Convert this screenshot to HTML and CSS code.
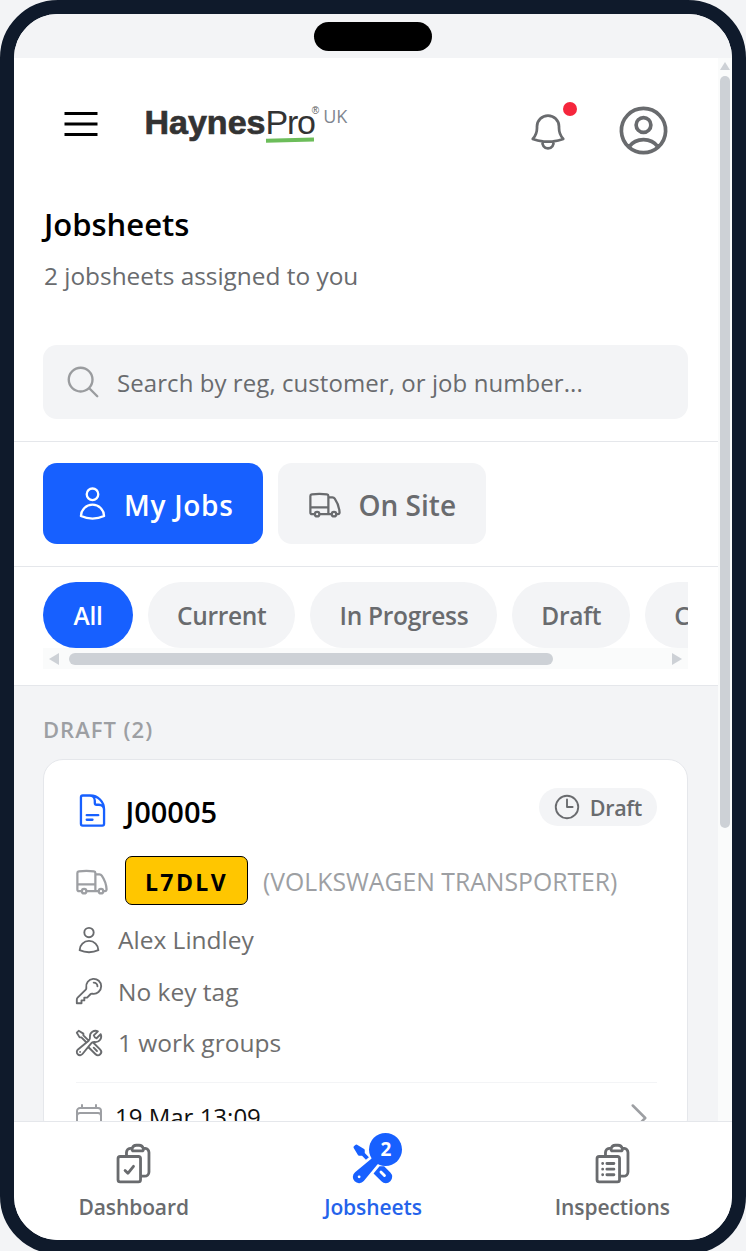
FILE: index.html
```html
<!DOCTYPE html>
<html lang="en">
<head>
  <meta charset="UTF-8" />
  <meta name="viewport" content="width=device-width, initial-scale=1.0"/>
  <title>Jobsheets</title>
  <link rel="stylesheet" href="styles.css">
</head>
<body>
  <svg class="sprite" width="0" height="0" aria-hidden="true">
    <symbol id="i-user" viewBox="0 0 24 24"><path d="M15.75 6a3.75 3.75 0 1 1-7.5 0 3.75 3.75 0 0 1 7.5 0ZM4.501 20.118a7.5 7.5 0 0 1 14.998 0A17.933 17.933 0 0 1 12 21.75c-2.676 0-5.216-.584-7.499-1.632Z"/></symbol>
    <symbol id="i-truck" viewBox="0 0 24 24"><path d="M8.25 18.75a1.5 1.5 0 0 1-3 0m3 0a1.5 1.5 0 0 0-3 0m3 0h6m-9 0H3.375a1.125 1.125 0 0 1-1.125-1.125V14.25m17.25 4.5a1.5 1.5 0 0 1-3 0m3 0a1.5 1.5 0 0 0-3 0m3 0h1.125c.621 0 1.129-.504 1.09-1.124a17.902 17.902 0 0 0-3.213-9.193 2.056 2.056 0 0 0-1.58-.86H14.25M16.5 18.75h-2.25m0-11.177v-.958c0-.568-.422-1.048-.987-1.106a48.554 48.554 0 0 0-10.026 0 1.106 1.106 0 0 0-.987 1.106v7.635m12-6.677v6.677m0 4.5v-4.5m0 0h-12"/></symbol>
  </svg>

  <div class="phone">
    <div class="status"><div class="notch"></div></div>

    <div class="screen">
      <main class="content">
        <section class="top">
          <header class="header">
            <div class="header-left">
              <svg class="icon menu-icon" viewBox="0 0 24 24"><path d="M3.75 6.75h16.5M3.75 12h16.5m-16.5 5.25h16.5"/></svg>
              <div class="logo">
                <span class="logo-name"><b>Haynes</b><span class="logo-pro">Pro</span></span>
                <span class="logo-reg">®</span>
                <span class="logo-region">UK</span>
              </div>
            </div>
            <div class="header-right">
              <div class="bell">
                <svg class="icon bell-icon" viewBox="0 0 24 24"><path d="M14.857 17.082a23.848 23.848 0 0 0 5.454-1.31A8.967 8.967 0 0 1 18 9.75V9A6 6 0 0 0 6 9v.75a8.967 8.967 0 0 1-2.312 6.022c1.733.64 3.56 1.085 5.455 1.31m5.714 0a24.255 24.255 0 0 1-5.714 0m5.714 0a3 3 0 1 1-5.714 0"/></svg>
                <span class="bell-dot"></span>
              </div>
              <svg class="icon profile-icon" viewBox="0 0 24 24"><path d="M17.982 18.725A7.488 7.488 0 0 0 12 15.75a7.488 7.488 0 0 0-5.982 2.975m11.963 0a9 9 0 1 0-11.963 0m11.963 0A8.966 8.966 0 0 1 12 21a8.966 8.966 0 0 1-5.982-2.275M15 9.75a3 3 0 1 1-6 0 3 3 0 0 1 6 0Z"/></svg>
            </div>
          </header>

          <h1>Jobsheets</h1>
          <p class="subtitle">2 jobsheets assigned to you</p>

          <div class="search">
            <svg class="icon search-icon" viewBox="0 0 24 24"><path d="m21 21-5.197-5.197m0 0A7.5 7.5 0 1 0 5.196 5.196a7.5 7.5 0 0 0 10.607 10.607Z"/></svg>
            <span>Search by reg, customer, or job number...</span>
          </div>
        </section>

        <section class="tabs">
          <div class="tab active">
            <svg class="icon tab-user"><use href="#i-user"/></svg>
            <span>My Jobs</span>
          </div>
          <div class="tab">
            <svg class="icon tab-truck"><use href="#i-truck"/></svg>
            <span>On Site</span>
          </div>
        </section>

        <section class="filters">
          <div class="chips">
            <div class="chip active">All</div>
            <div class="chip">Current</div>
            <div class="chip">In Progress</div>
            <div class="chip">Draft</div>
            <div class="chip">Completed</div>
          </div>
          <div class="hscroll">
            <span class="arrow-left"></span>
            <span class="hscroll-thumb"></span>
            <span class="arrow-right"></span>
          </div>
        </section>

        <section class="list">
          <div class="group-label">DRAFT (2)</div>
          <article class="card">
            <div class="card-head">
              <div class="job-no">
                <svg class="icon doc-icon" viewBox="0 0 24 24"><path d="M19.5 14.25v-2.625a3.375 3.375 0 0 0-3.375-3.375h-1.5A1.125 1.125 0 0 1 13.5 7.125v-1.5a3.375 3.375 0 0 0-3.375-3.375H8.25m0 12.75h7.5m-7.5 3H12M10.5 2.25H5.625c-.621 0-1.125.504-1.125 1.125v17.25c0 .621.504 1.125 1.125 1.125h12.75c.621 0 1.125-.504 1.125-1.125V11.25a9 9 0 0 0-9-9Z"/></svg>
                <span>J00005</span>
              </div>
              <div class="status-pill">
                <svg class="icon clock-icon" viewBox="0 0 24 24"><path d="M12 6v6h4.5m4.5 0a9 9 0 1 1-18 0 9 9 0 0 1 18 0Z"/></svg>
                <span>Draft</span>
              </div>
            </div>

            <div class="vehicle">
              <svg class="icon vehicle-icon"><use href="#i-truck"/></svg>
              <span class="plate">L7DLV</span>
              <span class="model">(VOLKSWAGEN TRANSPORTER)</span>
            </div>

            <div class="meta">
              <svg class="icon meta-icon"><use href="#i-user"/></svg>
              <span>Alex Lindley</span>
            </div>
            <div class="meta">
              <svg class="icon meta-icon" viewBox="0 0 24 24"><path d="M15.75 5.25a3 3 0 0 1 3 3m3 0a6 6 0 0 1-7.029 5.912c-.563-.097-1.159.026-1.563.43L10.5 17.25H8.25v2.25H6v2.25H2.25v-2.818c0-.597.237-1.17.659-1.591l6.499-6.499c.404-.404.527-1 .43-1.563A6 6 0 1 1 21.75 8.25Z"/></svg>
              <span>No key tag</span>
            </div>
            <div class="meta">
              <svg class="icon meta-icon" viewBox="0 0 24 24"><path d="M11.42 15.17 17.25 21A2.652 2.652 0 0 0 21 17.25l-5.877-5.877M11.42 15.17l2.496-3.03c.317-.384.74-.626 1.208-.766M11.42 15.17l-4.655 5.653a2.548 2.548 0 1 1-3.586-3.586l6.837-5.63m5.108-.233c.55-.164 1.163-.188 1.743-.14a4.5 4.5 0 0 0 4.486-6.336l-3.276 3.277a3.004 3.004 0 0 1-2.25-2.25l3.276-3.276a4.5 4.5 0 0 0-6.336 4.486c.091 1.076-.071 2.264-.904 2.95l-.102.085m-1.745 1.437L5.909 7.5H4.5L2.25 3.75l1.5-1.5L7.5 4.5v1.409l4.26 4.26m-1.745 1.437 1.745-1.437m6.615 8.206L15.75 15.75M4.867 19.125h.008v.008h-.008v-.008Z"/></svg>
              <span>1 work groups</span>
            </div>

            <div class="card-foot">
              <div class="date">
                <svg class="icon date-icon" viewBox="0 0 24 24"><path d="M6.75 3v2.25M17.25 3v2.25M3 18.75V7.5a2.25 2.25 0 0 1 2.25-2.25h13.5A2.25 2.25 0 0 1 21 7.5v11.25m-18 0A2.25 2.25 0 0 0 5.25 21h13.5A2.25 2.25 0 0 0 21 18.75m-18 0v-7.5A2.25 2.25 0 0 1 5.25 9h13.5A2.25 2.25 0 0 1 21 11.25v7.5"/></svg>
                <span>19 Mar 13:09</span>
              </div>
              <svg class="icon chevron-icon" viewBox="0 0 24 24"><path d="m8.25 4.5 7.5 7.5-7.5 7.5"/></svg>
            </div>
          </article>
        </section>
      </main>

      <div class="vscroll">
        <span class="arrow-up"></span>
        <span class="vscroll-thumb"></span>
      </div>
    </div>

    <nav class="bottom-nav">
      <div class="nav-item">
        <svg class="icon nav-icon" viewBox="0 0 24 24"><path d="M11.35 3.836c-.065.21-.1.433-.1.664 0 .414.336.75.75.75h4.5a.75.75 0 0 0 .75-.75 2.25 2.25 0 0 0-.1-.664m-5.8 0A2.251 2.251 0 0 1 13.5 2.25H15c1.012 0 1.867.668 2.15 1.586m-5.8 0c-.376.023-.75.05-1.124.08C9.095 4.01 8.25 4.973 8.25 6.108V8.25m8.9-4.414c.376.023.75.05 1.124.08 1.131.094 1.976 1.057 1.976 2.192V16.5A2.25 2.25 0 0 1 18 18.75h-2.25m-7.5-10.5H4.875c-.621 0-1.125.504-1.125 1.125v11.25c0 .621.504 1.125 1.125 1.125h9.75c.621 0 1.125-.504 1.125-1.125V18.75m-7.5-10.5h6.375c.621 0 1.125.504 1.125 1.125v9.375m-8.25-3 1.5 1.5 3-3.75"/></svg>
        <span>Dashboard</span>
      </div>
      <div class="nav-item active">
        <div class="nav-icon-wrap">
          <svg class="nav-icon solid" viewBox="0 0 24 24"><path fill-rule="evenodd" d="M12 6.75a5.25 5.25 0 0 1 6.775-5.025.75.75 0 0 1 .313 1.248l-3.32 3.319c.063.475.276.934.641 1.299.365.365.824.578 1.3.64l3.318-3.319a.75.75 0 0 1 1.248.313 5.25 5.25 0 0 1-5.472 6.756c-1.018-.086-1.87.1-2.309.634L7.344 21.3A3.298 3.298 0 1 1 2.7 16.657l8.684-7.151c.533-.44.72-1.291.634-2.309A5.342 5.342 0 0 1 12 6.75ZM4.117 19.125a.75.75 0 0 1 .75-.75h.008a.75.75 0 0 1 .75.75v.008a.75.75 0 0 1-.75.75h-.008a.75.75 0 0 1-.75-.75v-.008Z" clip-rule="evenodd"/><path d="m10.076 8.64-2.201-2.2V4.874a.75.75 0 0 0-.364-.643l-3.75-2.25a.75.75 0 0 0-.916.113l-.75.75a.75.75 0 0 0-.113.916l2.25 3.75a.75.75 0 0 0 .643.364h1.564l2.062 2.062 1.575-1.297Z"/><path fill-rule="evenodd" d="m12.556 17.329 4.183 4.182a3.375 3.375 0 0 0 4.773-4.773l-3.306-3.305a6.803 6.803 0 0 1-1.53.043c-.394-.034-.682-.006-.867.042a.589.589 0 0 0-.167.063l-3.086 3.748Zm3.414-1.36a.75.75 0 0 1 1.06 0l1.875 1.876a.75.75 0 1 1-1.06 1.06L15.97 17.03a.75.75 0 0 1 0-1.06Z" clip-rule="evenodd"/></svg>
          <span class="nav-badge">2</span>
        </div>
        <span>Jobsheets</span>
      </div>
      <div class="nav-item">
        <svg class="icon nav-icon" viewBox="0 0 24 24"><path d="M9 12h3.75M9 15h3.75M9 18h3.75m3 .75H18a2.25 2.25 0 0 0 2.25-2.25V6.108c0-1.135-.845-2.098-1.976-2.192a48.424 48.424 0 0 0-1.123-.08m-5.801 0c-.065.21-.1.433-.1.664 0 .414.336.75.75.75h4.5a.75.75 0 0 0 .75-.75 2.25 2.25 0 0 0-.1-.664m-5.8 0A2.251 2.251 0 0 1 13.5 2.25H15c1.012 0 1.867.668 2.15 1.586m-5.8 0c-.376.023-.75.05-1.124.08C9.095 4.01 8.25 4.973 8.25 6.108V8.25m0 0H4.875c-.621 0-1.125.504-1.125 1.125v11.25c0 .621.504 1.125 1.125 1.125h9.75c.621 0 1.125-.504 1.125-1.125V9.375c0-.621-.504-1.125-1.125-1.125H8.25ZM6.75 12h.008v.008H6.75V12Zm0 3h.008v.008H6.75V15Zm0 3h.008v.008H6.75V18Z"/></svg>
        <span>Inspections</span>
      </div>
    </nav>
  </div>
</body>
</html>
```

FILE: styles.css
```css
:root {
  --blue: #1760ff;
  --frame: #0f1a2b;
  --soft: #f3f4f6;
  --line: #e5e7eb;
  --grey: #696b6e;
  --muted: #9d9fa3;
  --bar: #cdd1d6;
}

html, body {
  margin: 0;
  height: 100%;
  overflow: hidden;
}

body {
  background: var(--soft);
  font-family: "Open Sans", "Noto Sans", sans-serif;
  color: #000;
}

.sprite {
  display: block;
  height: 0;
}

.icon {
  display: block;
  flex: none;
  fill: none;
  stroke: currentColor;
  stroke-width: 1.5;
  stroke-linecap: round;
  stroke-linejoin: round;
}

.phone {
  box-sizing: border-box;
  width: 746px;
  height: 1254px;
  border: 14px solid var(--frame);
  border-radius: 58px;
  background: #fff;
  overflow: hidden;
  display: flex;
  flex-direction: column;
  position: relative;
}

.status {
  flex: none;
  height: 44px;
  background: var(--soft);
}

.notch {
  position: absolute;
  top: 8px;
  left: 300px;
  width: 118px;
  height: 29px;
  border-radius: 15px;
  background: #000;
}

.screen {
  flex: 1;
  min-height: 0;
  display: flex;
}

.content {
  flex: 1;
  min-width: 0;
  overflow: hidden;
}

.vscroll {
  flex: none;
  box-sizing: border-box;
  width: 14px;
  padding: 4px 2px 0;
  background: #fafbfb;
  display: flex;
  flex-direction: column;
  align-items: center;
}

.arrow-up {
  width: 0;
  height: 0;
  border-left: 5px solid transparent;
  border-right: 5px solid transparent;
  border-bottom: 8px solid var(--bar);
}

.vscroll-thumb {
  width: 10px;
  height: 752px;
  margin-top: 6px;
  border-radius: 5px;
  background: var(--bar);
}

/* top block */
.top {
  padding: 41px 30px 22px 29px;
  border-bottom: 1px solid var(--line);
}

.header {
  display: flex;
  justify-content: space-between;
  align-items: flex-start;
  margin: 0 15.5px 0 13.5px;
}

.header-left {
  display: flex;
  align-items: flex-start;
  gap: 40px;
  margin-top: 1px;
}

.menu-icon {
  width: 48px;
  height: 48px;
  color: #000;
  stroke-linecap: butt;
}

.logo {
  display: flex;
  align-items: flex-start;
  color: #333;
}

.logo-name {
  font-family: "Liberation Sans", Arial, sans-serif;
  font-size: 34px;
  line-height: 44px;
}

.logo-name b {
  -webkit-text-stroke: 0.7px #333;
}

.logo-pro {
  position: relative;
  letter-spacing: -1.2px;
}

.logo-pro::after {
  content: "";
  position: absolute;
  left: 1px;
  right: 0;
  bottom: -1px;
  height: 4px;
  background: #6cbd5a;
  transform: rotate(-1.5deg);
}

.logo-reg {
  font-family: "Liberation Sans", Arial, sans-serif;
  font-size: 10px;
  line-height: 12px;
  margin: 5px 0 0 -3px;
  color: #555;
}

.logo-region {
  font-size: 18px;
  line-height: 24px;
  margin: 4px 0 0 4px;
  color: #808690;
}

.header-right {
  display: flex;
  align-items: center;
  gap: 43.5px;
  margin-top: 2px;
  color: var(--grey);
}

.bell {
  position: relative;
  margin-top: 2px;
}

.bell-icon {
  width: 44px;
  height: 44px;
}

.bell-dot {
  position: absolute;
  top: -8px;
  right: -7px;
  width: 14px;
  height: 14px;
  border-radius: 50%;
  background: #f5263c;
}

.profile-icon {
  width: 59px;
  height: 59px;
}

h1 {
  margin: 44px 0 0 1px;
  font-size: 31px;
  line-height: 40px;
  font-weight: 600;
}

.subtitle {
  margin: 15px 0 0 1px;
  font-size: 24.4px;
  line-height: 34px;
  color: var(--grey);
}

.search {
  margin-top: 52px;
  height: 74px;
  padding-left: 21px;
  border-radius: 14px;
  background: var(--soft);
  display: flex;
  align-items: center;
  gap: 15px;
  font-size: 24px;
  letter-spacing: 0.07px;
  color: var(--grey);
}

.search-icon {
  width: 38px;
  height: 38px;
  color: #9a9c9f;
}

/* job scope tabs */
.tabs {
  display: flex;
  gap: 15px;
  padding: 21px 29px 22px;
  border-bottom: 1px solid var(--line);
}

.tab {
  height: 81px;
  padding: 0 30px 0 29px;
  border-radius: 14px;
  background: var(--soft);
  color: var(--grey);
  display: flex;
  align-items: center;
  gap: 16px;
  font-size: 28px;
  font-weight: 600;
}

.tab span {
  padding-top: 2px;
}

.tab.active {
  padding-right: 29px;
  gap: 13px;
  background: var(--blue);
  color: #fff;
  letter-spacing: 0.7px;
}

.tab-user {
  width: 37px;
  height: 37px;
  margin-left: 2px;
}

.tab-truck {
  width: 36px;
  height: 36px;
}

/* status filter */
.filters {
  padding: 15px 30px 16px 29px;
  border-bottom: 1px solid var(--line);
}

.chips {
  display: flex;
  gap: 15px;
  overflow: hidden;
}

.chip {
  flex: none;
  height: 66px;
  padding: 0 29px;
  border-radius: 33px;
  background: var(--soft);
  color: var(--grey);
  display: flex;
  align-items: center;
  font-size: 24.5px;
  letter-spacing: -0.3px;
  font-weight: 600;
}

.chip.active {
  padding: 0 30.5px;
  background: var(--blue);
  color: #fff;
}

.hscroll {
  box-sizing: border-box;
  height: 21px;
  padding: 0 6px;
  background: #fafbfb;
  display: flex;
  align-items: center;
  gap: 10px;
}

.arrow-left {
  width: 0;
  height: 0;
  border-top: 6px solid transparent;
  border-bottom: 6px solid transparent;
  border-right: 10px solid var(--bar);
}

.arrow-right {
  width: 0;
  height: 0;
  margin-left: auto;
  border-top: 6px solid transparent;
  border-bottom: 6px solid transparent;
  border-left: 10px solid var(--bar);
}

.hscroll-thumb {
  width: 484px;
  height: 12px;
  border-radius: 6px;
  background: var(--bar);
}

/* job list */
.list {
  padding: 27px 30px 0 29px;
  background: var(--soft);
  height: 600px;
}

.group-label {
  font-size: 22px;
  line-height: 32px;
  font-weight: 600;
  letter-spacing: 1px;
  color: var(--muted);
}

.card {
  margin-top: 14px;
  padding: 28px 30px 0 32px;
  border: 1px solid var(--line);
  border-radius: 20px;
  background: #fff;
}

.card-head {
  display: flex;
  justify-content: space-between;
  align-items: flex-start;
}

.job-no {
  display: flex;
  align-items: center;
  gap: 15px;
  height: 38px;
  margin-top: 3px;
  margin-left: -2.5px;
  font-size: 29px;
  font-weight: 600;
}

.job-no span {
  line-height: 38px;
  margin-top: 3px;
}

.doc-icon {
  width: 37px;
  height: 37px;
  color: var(--blue);
}

.status-pill {
  height: 38px;
  padding: 0 15px 0 13px;
  border-radius: 19px;
  background: var(--soft);
  color: var(--grey);
  display: flex;
  align-items: center;
  gap: 8px;
  font-size: 21.5px;
  letter-spacing: -0.3px;
  font-weight: 600;
}

.clock-icon {
  width: 30px;
  height: 30px;
}

.vehicle {
  display: flex;
  align-items: center;
  margin-top: 27px;
  margin-left: -2px;
  color: var(--muted);
}

.vehicle-icon {
  width: 36px;
  height: 36px;
  margin-right: 15px;
}

.plate {
  box-sizing: border-box;
  width: 123px;
  height: 49px;
  padding-top: 2px;
  border: 1px solid #000;
  border-radius: 7px;
  background: #ffc600;
  color: #000;
  display: flex;
  align-items: center;
  justify-content: center;
  font-size: 23px;
  font-weight: 700;
  letter-spacing: 2.4px;
}

.model {
  margin-left: 15px;
  padding-top: 2px;
  font-size: 24.75px;
}

.meta {
  display: flex;
  align-items: center;
  gap: 14px;
  height: 51.5px;
  margin-left: -2px;
  font-size: 24.5px;
  color: #6e6e6e;
}

.vehicle + .meta {
  margin-top: 9px;
}

.meta-icon {
  width: 30px;
  height: 30px;
  color: var(--grey);
}

.card-foot {
  display: flex;
  justify-content: space-between;
  margin-top: 13px;
  padding-top: 18px;
  border-top: 1px solid var(--soft);
}

.date {
  display: flex;
  align-items: center;
  gap: 10px;
  height: 32px;
  margin-left: -3px;
  font-size: 24px;
  color: #111;
}

.date-icon {
  width: 32px;
  height: 32px;
  color: var(--muted);
}

.chevron-icon {
  width: 40px;
  height: 40px;
  margin: -3px -1.5px 0 0;
  color: var(--muted);
}

/* bottom navigation */
.bottom-nav {
  flex: none;
  box-sizing: border-box;
  height: 122px;
  border-top: 1px solid var(--line);
  background: #fff;
  display: grid;
  grid-template-columns: repeat(3, 1fr);
  position: relative;
  margin-bottom: -3px;
}

.nav-item {
  display: flex;
  flex-direction: column;
  align-items: center;
  padding-top: 18.5px;
  gap: 7px;
  font-size: 21px;
  letter-spacing: -0.1px;
  font-weight: 600;
  color: var(--grey);
}

.nav-item.active {
  color: #2563eb;
}

.nav-icon {
  width: 45px;
  height: 45px;
}

.nav-icon.solid {
  display: block;
  fill: var(--blue);
}

.nav-icon-wrap {
  position: relative;
  height: 45px;
}

.nav-badge {
  position: absolute;
  top: -8px;
  right: -7px;
  width: 33px;
  height: 33px;
  border-radius: 50%;
  background: var(--blue);
  color: #fff;
  display: flex;
  align-items: center;
  justify-content: center;
  font-size: 19px;
  font-weight: 700;
}
```
